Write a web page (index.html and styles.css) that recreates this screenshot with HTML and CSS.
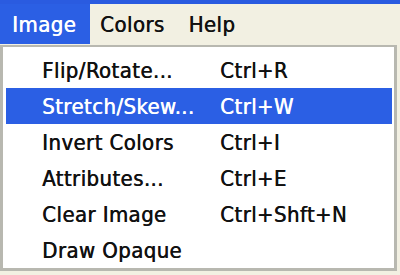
FILE: index.html
```html
<!DOCTYPE html>
<html lang="en">
<head>
    <meta charset="UTF-8">
    <title>Image menu</title>
    <link rel="stylesheet" href="styles.css">
</head>
<body>
    <div class="titlebar"></div>
    <div class="menubar">
        <span class="menubar-item active">Image</span>
        <span class="menubar-item">Colors</span>
        <span class="menubar-item">Help</span>
    </div>
    <div class="menu">
        <div class="menu-row"><span class="label">Flip/Rotate...</span><span class="key">Ctrl+R</span></div>
        <div class="menu-row selected"><span class="label">Stretch/Skew...</span><span class="key">Ctrl+W</span></div>
        <div class="menu-row"><span class="label">Invert Colors</span><span class="key">Ctrl+I</span></div>
        <div class="menu-row"><span class="label">Attributes...</span><span class="key">Ctrl+E</span></div>
        <div class="menu-row"><span class="label">Clear Image</span><span class="key">Ctrl+Shft+N</span></div>
        <div class="menu-row"><span class="label">Draw Opaque</span><span class="key"></span></div>
    </div>
</body>
</html>
```

FILE: styles.css
```css
* {
    margin: 0;
    padding: 0;
    box-sizing: border-box;
}
body {
    width: 400px;
    height: 275px;
    overflow: hidden;
    background: #f2f0e2;
    font-family: 'DejaVu Sans Condensed', 'DejaVu Sans', sans-serif;
    font-size: 22px;
    letter-spacing: 0.4px;
    color: #111;
    text-shadow: 0.5px 0 0 currentColor;
}
.titlebar {
    height: 4px;
    background: #2a5be0;
}
.menubar {
    display: flex;
    height: 40px;
    align-items: stretch;
}
.menubar-item {
    display: flex;
    align-items: center;
    padding: 0 12px;
}
.menubar-item.active {
    background: #2b5fe4;
    color: #fff;
    width: 90px;
    margin-right: -2px;
}
.menu {
    margin-top: 1px;
    width: 397px;
    height: 226px;
    background: #fff;
    border: 3px solid #b8b8b0;
    border-top-width: 2px;
    padding: 5px 2px 0 3px;
}
.menu-row {
    display: flex;
    height: 36px;
    align-items: center;
    padding-left: 36px;
}
.menu-row.selected {
    background: #2b5fe4;
    color: #fff;
}
.label {
    width: 178px;
}
```
